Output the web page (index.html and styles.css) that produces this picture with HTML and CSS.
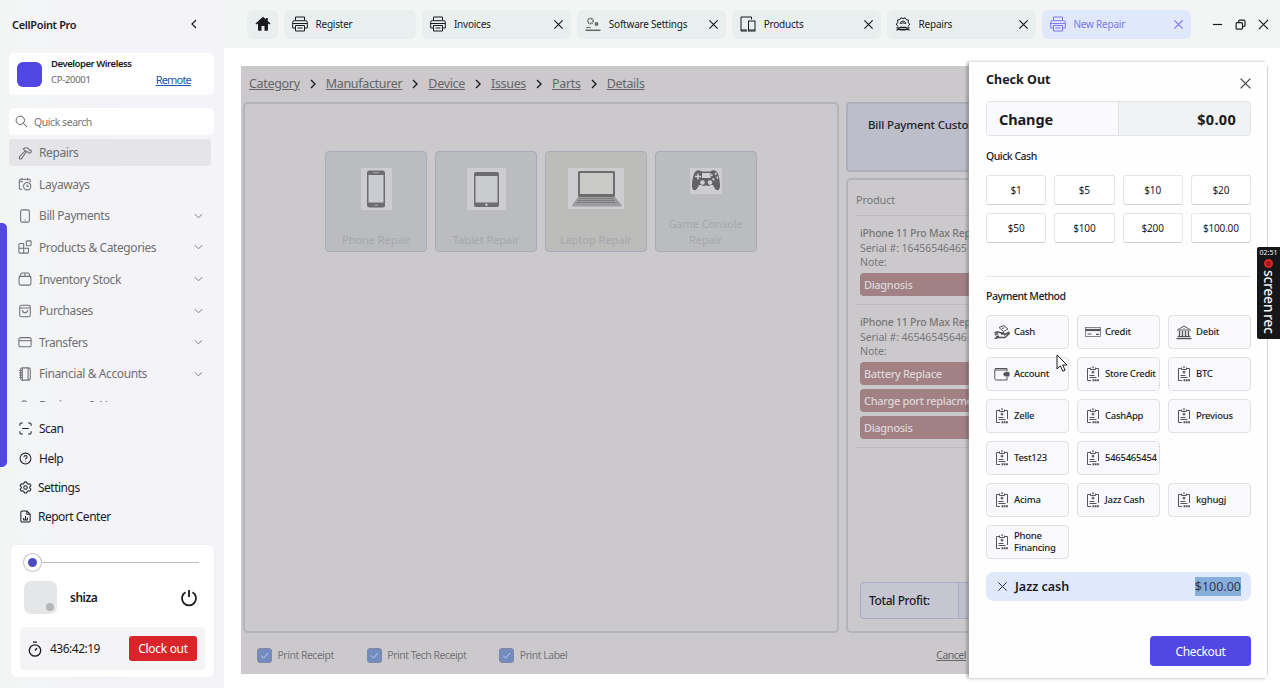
FILE: index.html
```html
<!DOCTYPE html>
<html lang="en">
<head>
  <meta charset="UTF-8">
  <title>CellPoint Pro</title>
  <link rel="stylesheet" href="styles.css">
</head>
<body>
  <!-- shared icons -->
  <svg class="sprite" xmlns="http://www.w3.org/2000/svg">
    <symbol id="i-x" viewBox="0 0 12 12"><path d="M1.5 1.5l9 9M10.5 1.5l-9 9"/></symbol>
    <symbol id="i-down" viewBox="0 0 10 6"><path d="M1 1l4 4 4-4"/></symbol>
    <symbol id="i-right" viewBox="0 0 6 10"><path d="M1 1l4 4-4 4"/></symbol>
    <symbol id="i-printer" viewBox="0 0 16 16"><path d="M3.500 4.500V1h9v3.500M3 12H.7V6.200q0-1.500 1.500-1.500h11.600q1.500 0 1.500 1.500V12H13M.7 7.500h14.600M3.500 9.500h9V15h-9zM5.500 12h5"/></symbol>
    <symbol id="i-bill" viewBox="0 0 16 16"><path d="M5 2.500H2.500v12H6M11 2.500h2.500V11M5.500 1.500v2h5v-2M4.500 9.500h5M4.500 11.500h7"/><path d="M8 .3v2M8 4.800v2.800M6.600 6.200h2.800" stroke-width="1.300"/><path d="M7.500 14.200h6.500" stroke-dasharray="1.800 .5" stroke-width="2"/></symbol>
    <symbol id="i-check" viewBox="0 0 10 8"><path d="M1 4l3 3 5-6"/></symbol>
  </svg>

  <div class="app">
    <aside class="sidebar">
      <div class="brand">
        <span>CellPoint Pro</span>
        <svg class="collapse" viewBox="0 0 6 10"><path d="M5 1L1 5l4 4"/></svg>
      </div>

      <div class="store">
        <div class="store-logo"></div>
        <div class="store-info">
          <b>Developer Wireless</b>
          <span>CP-20001</span>
        </div>
        <a class="remote">Remote</a>
      </div>

      <div class="search">
        <svg viewBox="0 0 14 14"><circle cx="5.700" cy="5.700" r="4.500"/><path d="M9 9l4 4"/></svg>
        <span>Quick search</span>
      </div>

      <div class="nav">
        <div class="nav-item active">
          <svg viewBox="0 0 16 16"><path d="M6 3.500Q9 .8 12 3l1 2 1.700-.6.5 2.500-2.500 1.500-2-2-1.200.5L4 14.300q-1.200.9-2.200 0-.9-1 0-2.200L8.300 5.500 6 3.500zM8.500 5.500l1.500 1.500"/></svg>
          <span>Repairs</span>
        </div>
        <div class="nav-item">
          <svg viewBox="0 0 16 16"><path d="M5 14H3q-1.500 0-1.500-1.500V4Q1.500 2.500 3 2.500h9.500Q14 2.500 14 4v2M1.500 5.500h4M4.500 1v3M11 1v3"/><circle cx="10.500" cy="10.500" r="4.200"/><path d="M10.300 8.500v2.300h2"/></svg>
          <span>Layaways</span>
        </div>
        <div class="nav-item">
          <svg viewBox="0 0 16 16"><rect x="3" y="1" width="10" height="14" rx="2"/><path d="M7.500 12.500h1.200"/></svg>
          <span>Bill Payments</span>
          <svg class="chev"><use href="#i-down"/></svg>
        </div>
        <div class="nav-item">
          <svg viewBox="0 0 16 16"><path d="M6.500 4H2.300Q1 4 1 5.300v8.400Q1 15 2.300 15h8.400q1.300 0 1.300-1.300V9.500H1M6.500 4v11"/><rect x="9.500" y="1" width="5.500" height="5.500" rx="1"/></svg>
          <span>Products &amp; Categories</span>
          <svg class="chev"><use href="#i-down"/></svg>
        </div>
        <div class="nav-item">
          <svg viewBox="0 0 16 16"><rect x="1.200" y="5" width="13.600" height="10" rx="2"/><path d="M1.200 6.500L3.500 2q.4-.8 1.300-.8h6.400q.9 0 1.300.8l2.300 4.500M8 1v4"/></svg>
          <span>Inventory Stock</span>
          <svg class="chev"><use href="#i-down"/></svg>
        </div>
        <div class="nav-item">
          <svg viewBox="0 0 16 16"><rect x="2" y="1.500" width="12" height="13" rx="2"/><path d="M2 4.500h12M5 7q.3 3 3 3t3-3"/></svg>
          <span>Purchases</span>
          <svg class="chev"><use href="#i-down"/></svg>
        </div>
        <div class="nav-item">
          <svg viewBox="0 0 16 16"><rect x="1" y="3" width="14" height="10.500" rx="2"/><path d="M1 6.500h14"/></svg>
          <span>Transfers</span>
          <svg class="chev"><use href="#i-down"/></svg>
        </div>
        <div class="nav-item">
          <svg viewBox="0 0 16 16"><rect x="3" y="1" width="11" height="14" rx="2"/><path d="M11.500 1v14M5 1v14M1.500 4h3M1.500 6.700h3M1.500 9.400h3M1.500 12h3"/></svg>
          <span>Financial &amp; Accounts</span>
          <svg class="chev"><use href="#i-down"/></svg>
        </div>
        <div class="nav-item">
          <svg viewBox="0 0 16 16"><circle cx="7" cy="5" r="3"/><path d="M1 15q0-5 6-5t6 5"/></svg>
          <span>Business &amp; Users</span>
        </div>
      </div>

      <div class="tools">
        <div class="tool">
          <svg viewBox="0 0 14 14"><path d="M1 4V2.500Q1 1 2.500 1H4M10 1h1.500Q13 1 13 2.500V4M13 10v1.500q0 1.500-1.500 1.500H10M4 13H2.500Q1 13 1 11.500V10M3.500 7h7"/></svg>
          <span>Scan</span>
        </div>
        <div class="tool">
          <svg viewBox="0 0 14 14"><circle cx="7" cy="7" r="5.800"/><path d="M5.200 5.600q.2-1.800 1.900-1.800 1.700.1 1.700 1.600 0 1-1.800 2v.7M7 9.600v.8"/></svg>
          <span>Help</span>
        </div>
        <div class="tool">
          <svg viewBox="0 0 14 14"><path d="M5.800 1h2.400l.5 1.700 1.200.7 1.700-.4 1.200 2.100L11.600 6.400v1.200l1.200 1.300-1.200 2.100-1.700-.4-1.200.7-.5 1.700H5.800l-.5-1.700-1.200-.7-1.700.4L1.200 8.900l1.200-1.300V6.400L1.200 5.100 2.400 3l1.700.4 1.200-.7z"/><circle cx="7" cy="7" r="1.900"/></svg>
          <span>Settings</span>
        </div>
        <div class="tool">
          <svg viewBox="0 0 14 14"><path d="M8.500 1H3.500Q2 1 2 2.500v9Q2 13 3.500 13h7q1.500 0 1.500-1.500V4.500zM8.500 1v3.500H12M5 8.500v2M7 6.500v4M9 8v2.500M4.500 10.700h5"/></svg>
          <span>Report Center</span>
        </div>
      </div>

      <div class="user">
        <div class="slider"><i></i></div>
        <div class="user-row">
          <div class="avatar"><i></i></div>
          <b>shiza</b>
          <svg class="power" viewBox="0 0 18 18"><path d="M5.500 3.300A7 7 0 1 0 12.500 3.300M9 1v7"/></svg>
        </div>
        <div class="clock">
          <svg viewBox="0 0 14 16"><circle cx="7" cy="9.500" r="5.700"/><path d="M5 1.200h4M7 9.500l2-2.500"/></svg>
          <span>436:42:19</span>
          <button class="clock-out">Clock out</button>
        </div>
      </div>
      <div class="edge-bar"></div>
    </aside>

    <div class="content">
      <header class="topbar">
        <div class="home">
          <svg viewBox="0 0 16 16"><path d="M8 .8L.5 7.600l1 1L3 7.500V14q0 .8.800.8H6.500V10h3v4.800h2.700q.8 0 .8-.8V7.500l1.500 1.100 1-1L12.800 5V2h-2v1.300z"/></svg>
        </div>
        <div class="tab register">
          <svg class="tab-icon"><use href="#i-printer"/></svg>
          <span>Register</span>
        </div>
        <div class="tab">
          <svg class="tab-icon"><use href="#i-printer"/></svg>
          <span>Invoices</span>
          <svg class="tab-x"><use href="#i-x"/></svg>
        </div>
        <div class="tab">
          <svg class="tab-icon soft" viewBox="0 0 16 16"><circle cx="5.500" cy="5" r="2.600" stroke-dasharray="1.300 .5" stroke-width="1.600"/><circle cx="11.500" cy="8" r="1.200" stroke-width="1.500"/><path d="M1 12q3-1.800 5 0" /><path d="M.5 14.300h15" stroke-width="1.500"/></svg>
          <span>Software Settings</span>
          <svg class="tab-x"><use href="#i-x"/></svg>
        </div>
        <div class="tab">
          <svg class="tab-icon" viewBox="0 0 16 16"><path d="M7 15H1V1h10.500v2.500M1 14h6"/><rect x="8.500" y="5" width="6.500" height="10"/><path d="M8.500 14H15"/></svg>
          <span>Products</span>
          <svg class="tab-x"><use href="#i-x"/></svg>
        </div>
        <div class="tab">
          <svg class="tab-icon" viewBox="0 0 16 16"><path d="M3 10.500L1.200 8 3 6.500 2.500 4l2.300-.4L6 1.700l2 1 2-1 1.200 1.900 2.300.4L13 6.500 14.800 8 13 10.500M5 8q.8-3 3-3t3 3M6.200 7.500q1.800-1.500 3.600 0"/><path d="M1.500 11.500q2 1.200 4 0h5q2 1.200 4 0M1.500 14.300q2-1.500 4-.6h5q2-.9 4 .6" stroke-width="1.400"/></svg>
          <span>Repairs</span>
          <svg class="tab-x"><use href="#i-x"/></svg>
        </div>
        <div class="tab current">
          <svg class="tab-icon"><use href="#i-printer"/></svg>
          <span>New Repair</span>
          <svg class="tab-x"><use href="#i-x"/></svg>
        </div>
        <div class="window-buttons">
          <svg viewBox="0 0 12 12"><path d="M1 6h10"/></svg>
          <svg viewBox="0 0 12 12"><rect x="1.200" y="4" width="7" height="7" rx="1.200"/><path d="M4 4V2.500Q4 1.200 5.300 1.200h4.200q1.400 0 1.400 1.400v4.200q0 1.400-1.400 1.400H8.200"/></svg>
          <svg viewBox="0 0 12 12"><path d="M1 1l10 10M11 1L1 11"/></svg>
        </div>
      </header>

      <main class="page">
        <div class="work">
          <div class="crumbs">
            <a>Category</a><svg><use href="#i-right"/></svg>
            <a>Manufacturer</a><svg><use href="#i-right"/></svg>
            <a>Device</a><svg><use href="#i-right"/></svg>
            <a>Issues</a><svg><use href="#i-right"/></svg>
            <a>Parts</a><svg><use href="#i-right"/></svg>
            <a>Details</a>
          </div>

          <div class="columns">
            <div class="catalog">
              <div class="category">
                <div class="pic"><svg width="31" height="42" viewBox="0 0 31 42"><rect x="6" y="2.500" width="18" height="37" rx="2.500" fill="#6d6d70"/><rect x="7.500" y="7" width="15" height="27.500" fill="#c9ccd0"/><path d="M12.500 4.500h5M13.500 37h3.500" stroke="#aaa"/></svg></div>
                <span>Phone Repair</span>
              </div>
              <div class="category">
                <div class="pic"><svg width="39" height="42" viewBox="0 0 39 42"><rect x="7" y="4" width="25" height="35" rx="2" fill="#6d6d70"/><rect x="8.500" y="8" width="22" height="26.500" fill="#c9cbcd"/><circle cx="19.500" cy="36.700" r="1.200" fill="#ccc"/></svg></div>
                <span>Tablet Repair</span>
              </div>
              <div class="category sand">
                <div class="pic"><svg width="56" height="41" viewBox="0 0 56 41"><rect x="10" y="3" width="37" height="26" rx="1.500" fill="#6d6d70"/><rect x="12" y="5" width="33" height="21" fill="#c9cac8"/><path d="M10 29h37l7 8.500q0 1-1 1H5q-1 0-1-1z" fill="#9c9c9e"/><path d="M11 30.500h35M10 32.500h37M8.500 34.500h40" stroke="#77777a" stroke-dasharray="2 .6"/></svg></div>
                <span>Laptop Repair</span>
              </div>
              <div class="category">
                <div class="pic"><svg width="32" height="26" viewBox="0 0 32 26"><path d="M6 3q3-1.500 5.500.5h9Q23 1.500 26 3q3 2 4 13 .3 6-2.500 6.300-2 .2-4.500-5.300h-2.500q-2 2-4.500.3-2.500 1.700-4.500-.3H9q-2.500 5.500-4.500 5.300Q1.700 22 2 16 3 5 6 3z" fill="#626266"/><rect x="12" y="5" width="8.500" height="5" fill="#cfcfd1"/><path d="M8 5.500v6M5 8.500h6" stroke="#cfcfd1" stroke-width="1.500"/><circle cx="12.500" cy="14.500" r="2.300" fill="#cfcfd1"/><circle cx="20" cy="14.500" r="2.300" fill="#cfcfd1"/><circle cx="24.500" cy="8.500" r="3" fill="none" stroke="#cfcfd1" stroke-dasharray="2 2.700" stroke-width="1.800"/></svg></div>
                <span>Game Console Repair</span>
              </div>
            </div>

            <div class="order">
              <div class="customer">Bill Payment Customer</div>
              <div class="cart">
                <div class="cart-head">Product</div>
                <div class="line">
                  <b>iPhone 11 Pro Max Repair</b>
                  <span>Serial #: 16456546465</span>
                  <span>Note:</span>
                  <div class="issue">Diagnosis</div>
                </div>
                <div class="line">
                  <b>iPhone 11 Pro Max Repair</b>
                  <span>Serial #: 46546545646</span>
                  <span>Note:</span>
                  <div class="issue">Battery Replace</div>
                  <div class="issue">Charge port replacment</div>
                  <div class="issue">Diagnosis</div>
                </div>
                <div class="profit"><b>Total Profit:</b><span></span></div>
              </div>
            </div>
          </div>

          <div class="options">
            <label><i><svg><use href="#i-check"/></svg></i>Print Receipt</label>
            <label><i><svg><use href="#i-check"/></svg></i>Print Tech Receipt</label>
            <label><i><svg><use href="#i-check"/></svg></i>Print Label</label>
            <a>Cancel</a>
          </div>
        </div>
      </main>
    </div>
  </div>

  <!-- checkout drawer -->
  <section class="drawer">
    <div class="drawer-head">
      <h2>Check Out</h2>
      <svg><use href="#i-x"/></svg>
    </div>
    <div class="change"><span>Change</span><span>$0.00</span></div>

    <h3>Quick Cash</h3>
    <div class="quick">
      <button>$1</button>
      <button>$5</button>
      <button>$10</button>
      <button>$20</button>
      <button>$50</button>
      <button>$100</button>
      <button>$200</button>
      <button>$100.00</button>
    </div>

    <h3 class="methods-title">Payment Method</h3>
    <div class="methods">
      <button>
        <svg viewBox="0 0 16 16"><path d="M5 3.500l5-2 4 3.500-4.500 2.500zM8 4.500l2.500-.8"/><path d="M.5 9l3-1.200 3 1h3l.5 1.200H7M10 11l4.500-2.500 1 .7L11 13.500H5L.5 14.500M1 11l3-1.500M2 13l3-1" stroke-width="1.500"/></svg>
        <span>Cash</span>
      </button>
      <button>
        <svg viewBox="0 0 16 16"><rect x=".5" y="3.500" width="15" height="9" stroke-width=".7"/><path d="M.5 6h15" stroke-width="2.200"/><path d="M2.500 10h4M11 10.300h3" stroke-width="1.200"/></svg>
        <span>Credit</span>
      </button>
      <button>
        <svg viewBox="0 0 16 16"><path d="M1.500 6L8 2l6.500 4zM8 4.200v.8"/><path d="M3.500 7v5.500M6.500 7v5.500M9.500 7v5.500M12.500 7v5.500" stroke-width="1.400"/><path d="M1.500 12.700h13M.5 14.700h15" stroke-width="1.300"/></svg>
        <span>Debit</span>
      </button>
      <button>
        <svg viewBox="0 0 16 16"><path d="M13 5.500V2.500H2Q.8 2.500.8 3.500v9q0 1.500 1.500 1.500H13v-3M1 4h12"/><path d="M15 6.500h-3.500q-1.700 0-1.700 1.800 0 1.700 1.700 1.700H15z" fill="currentColor"/></svg>
        <span>Account</span>
      </button>
      <button><svg><use href="#i-bill"/></svg><span>Store Credit</span></button>
      <button><svg><use href="#i-bill"/></svg><span>BTC</span></button>
      <button><svg><use href="#i-bill"/></svg><span>Zelle</span></button>
      <button><svg><use href="#i-bill"/></svg><span>CashApp</span></button>
      <button><svg><use href="#i-bill"/></svg><span>Previous</span></button>
      <button><svg><use href="#i-bill"/></svg><span>Test123</span></button>
      <button><svg><use href="#i-bill"/></svg><span>5465465454</span></button>
      <button class="first"><svg><use href="#i-bill"/></svg><span>Acima</span></button>
      <button><svg><use href="#i-bill"/></svg><span>Jazz Cash</span></button>
      <button><svg><use href="#i-bill"/></svg><span>kghugj</span></button>
      <button><svg><use href="#i-bill"/></svg><span>Phone Financing</span></button>
    </div>

    <div class="paid">
      <svg><use href="#i-x"/></svg>
      <span>Jazz cash</span>
      <mark>$100.00</mark>
    </div>
    <button class="checkout">Checkout</button>
  </section>

  <div class="recorder">
    <small>02:51</small>
    <i></i>
    <span>screen<em>rec</em></span>
  </div>

  <svg class="cursor" viewBox="0 0 12 18"><path d="M1 1v14l3.300-3.200 2.500 5.400 2.300-1-2.500-5.200H11z"/></svg>
</body>
</html>
```
FILE: styles.css
```css
* {
  box-sizing: border-box;
}
body {
  margin: 0;
  width: 1280px;
  height: 688px;
  overflow: hidden;
  position: relative;
  background: #fff;
  color: #1b1b1f;
  font-family: "Noto Sans", "Open Sans", sans-serif;
  font-size: 12px;
}
svg {
  fill: none;
  stroke: currentColor;
  flex: none;
}
button {
  font-family: inherit;
  color: inherit;
  padding: 0;
}
.sprite {
  display: none;
}
.app {
  display: flex;
  height: 688px;
}

/* sidebar */
.sidebar {
  position: relative;
  width: 224px;
  padding: 0 10px 11px 9px;
  background: linear-gradient(90deg, #f3f5f5, #f4f3f8 60%);
  display: flex;
  flex-direction: column;
}
.brand {
  height: 53px;
  padding: 0 17px 5px 3px;
  display: flex;
  align-items: center;
  justify-content: space-between;
  font-size: 11px;
  font-weight: 600;
  letter-spacing: -0.35px;
}
.collapse {
  width: 6px;
  height: 10px;
  stroke-width: 1.2;
}
.store {
  display: flex;
  width: 205px;
  height: 42px;
  padding: 0 23px 0 8px;
  align-items: center;
  background: #fff;
  border-radius: 5px;
}
.store-logo {
  width: 25px;
  height: 25px;
  border-radius: 6px;
  background: #5147e5;
}
.store-info {
  flex: 1;
  margin-left: 9px;
  display: flex;
  flex-direction: column;
  font-size: 9.5px;
  line-height: 16px;
  padding-bottom: 4px;
  white-space: nowrap;
}
.store-info b {
  font-size: 9.5px;
  font-weight: 600;
  letter-spacing: -0.45px;
}
.store-info span {
  color: #666;
  letter-spacing: -0.3px;
}
.remote {
  margin: 11px 0 0 -40px;
  font-size: 11px;
  letter-spacing: -0.8px;
  color: #2456a8;
  text-decoration: underline;
}
.search {
  display: flex;
  align-items: center;
  width: 205px;
  height: 27px;
  margin-top: 13px;
  padding-left: 6px;
  background: #fff;
  border-radius: 5px;
  color: #777;
  font-size: 10.5px;
  letter-spacing: -0.45px;
}
.search svg {
  width: 13px;
  height: 13px;
  margin-right: 6px;
  color: #555;
}
.nav {
  height: 263px;
  margin-top: 4px;
  overflow: hidden;
  flex: none;
}
.nav-item {
  display: flex;
  align-items: center;
  width: 202px;
  height: 27px;
  margin-bottom: 4.65px;
  padding: 0 8px 0 9px;
  font-size: 12px;
  letter-spacing: -0.4px;
  color: #707074;
}
.nav-item svg {
  width: 14px;
  height: 14px;
  margin-right: 7px;
  stroke-width: 1.2;
}
.nav-item .chev {
  width: 9px;
  height: 6px;
  margin: 0 0 0 auto;
  stroke-width: 1;
}
.nav-item.active {
  background: #e5e5e7;
  border-radius: 3px;
}
.tools {
  margin-top: 12px;
}
.tool {
  display: flex;
  align-items: center;
  height: 29.4px;
  padding-left: 10px;
  font-size: 12px;
  letter-spacing: -0.5px;
}
.tool svg {
  width: 13px;
  height: 13px;
  margin-right: 7px;
  stroke-width: 1.1;
}
.tool:nth-child(n+3) svg {
  margin-right: 6px;
}
.user {
  width: 203px;
  height: 132px;
  margin: auto 0 0 2px;
  padding: 17px 9px 0;
  background: #fff;
  border-radius: 5px;
  box-shadow: 0 0 2px #e6e6ea;
}
.slider {
  height: 1px;
  margin: 0 6px 0 4px;
  background: #b9bac4;
}
.slider i {
  display: block;
  position: relative;
  top: -8px;
  width: 17px;
  height: 17px;
  border: 4px solid #fff;
  border-radius: 50%;
  background: #4a4cc0;
  box-shadow: 0 0 0 1px #c0c0c6;
}
.user-row {
  display: flex;
  align-items: center;
  height: 33px;
  margin: 18px 7px 13px 4px;
}
.user-row b {
  margin-left: 13px;
  font-weight: 600;
  letter-spacing: -0.5px;
}
.avatar {
  display: flex;
  align-items: flex-end;
  justify-content: flex-end;
  width: 33px;
  height: 33px;
  padding: 3px;
  border-radius: 7px;
  background: #e5e6e7;
}
.avatar i {
  width: 8px;
  height: 8px;
  border-radius: 50%;
  background: #b5b6b7;
}
.power {
  width: 18px;
  height: 18px;
  margin-left: auto;
  stroke-width: 1.8;
}
.clock {
  display: flex;
  align-items: center;
  height: 43px;
  padding: 0 8px;
  border-radius: 4px;
  background: #f4f4f6;
  font-size: 12px;
  letter-spacing: -0.5px;
}
.clock svg {
  width: 14px;
  height: 16px;
  margin-right: 8px;
  stroke-width: 1.3;
}
.clock-out {
  width: 68px;
  height: 25px;
  margin-left: auto;
  border: 0;
  border-radius: 3px;
  background: #d92529;
  color: #fff;
  font-size: 12px;
  letter-spacing: -0.3px;
}
.edge-bar {
  position: absolute;
  left: 0;
  top: 223px;
  width: 7px;
  height: 244px;
  border-radius: 0 5px 5px 0;
  background: #5147e5;
}

/* tabs */
.content {
  flex: 1;
  min-width: 0;
}
.topbar {
  display: flex;
  align-items: center;
  gap: 6px;
  height: 48px;
  padding-left: 23px;
  background: #f3f5f5;
}
.home,
.tab {
  display: flex;
  align-items: center;
  height: 29px;
  border-radius: 6px;
  background: #e9efee;
}
.home {
  width: 31px;
  justify-content: center;
}
.home svg {
  width: 16px;
  height: 16px;
  fill: #1b1b1f;
  stroke: none;
}
.tab {
  width: 148.900px;
  padding: 0 7px 0 8px;
  font-size: 10px;
  letter-spacing: -0.22px;
}
.tab.register {
  width: 132.400px;
}
.tab-icon {
  width: 16px;
  height: 16px;
  margin-right: 7.500px;
}
.tab-icon.soft {
  color: #666;
}
.tab-x {
  width: 11px;
  height: 11px;
  margin-left: auto;
  stroke-width: 1.3;
}
.tab.current {
  background: #dfe9fb;
  color: #7a78ee;
}
.window-buttons {
  display: flex;
  gap: 12px;
  margin-left: 15.500px;
}
.window-buttons svg {
  width: 11px;
  height: 11px;
  stroke-width: 1.3;
}

/* repair page, dimmed behind the drawer */
.page {
  padding: 18px 12px 0 17px;
}
.work {
  height: 608px;
  padding: 0 2px;
  background: #cbc9cb;
  color: #77777a;
  overflow: hidden;
}
.crumbs {
  display: flex;
  align-items: center;
  height: 36px;
  padding: 0 0 1px 6px;
  font-size: 12.5px;
  letter-spacing: -0.32px;
  color: #666669;
}
.crumbs a {
  text-decoration: underline;
}
.crumbs svg {
  width: 6px;
  height: 10px;
  margin: 0 10px;
  color: #1b1b1f;
  stroke-width: 1.4;
}
.columns {
  display: flex;
  gap: 7px;
  height: 531px;
}
.catalog {
  display: flex;
  align-items: flex-start;
  justify-content: center;
  gap: 7.700px;
  width: 596px;
  padding: 47px 0 0;
  border: 2px solid #b3b4b6;
  border-radius: 5px;
}
.category {
  display: flex;
  flex-direction: column;
  align-items: center;
  justify-content: space-between;
  width: 102px;
  height: 101px;
  padding: 16px 10px 3px;
  border: 1px solid #a9abb9;
  border-radius: 4px;
  background: #babcc0;
  color: #a6a7ab;
  font-size: 11px;
  line-height: 16px;
  letter-spacing: -0.05px;
  text-align: center;
}
.category.sand {
  background: #bcbcba;
}
.category span {
  white-space: nowrap;
}
.category:last-child span {
  white-space: normal;
}
.pic svg {
  display: block;
  background: #cdcdcf;
  stroke: none;
}
.order {
  flex: 1;
  display: flex;
  flex-direction: column;
  gap: 6px;
}
.customer {
  height: 70px;
  padding: 13px 0 0 20px;
  border: 2px solid #adb0b8;
  border-radius: 4px;
  background: #bcbeca;
  color: #222226;
  font-size: 11.5px;
  font-weight: 500;
  letter-spacing: -0.15px;
  white-space: nowrap;
}
.cart {
  display: flex;
  flex-direction: column;
  height: 455px;
  padding: 8px 8px 12px;
  border: 2px solid #b3b4b6;
  border-radius: 5px;
}
.cart-head {
  height: 28px;
  padding-top: 4px;
  font-size: 11px;
  letter-spacing: -0.2px;
  border-bottom: 1px solid #bdbdc0;
}
.line {
  display: flex;
  flex-direction: column;
  padding: 10px 0 8px 4px;
  border-bottom: 1px solid #bdbdc0;
  font-size: 10.5px;
  line-height: 14.500px;
  letter-spacing: -0.08px;
}
.line b {
  font-weight: 500;
  letter-spacing: -0.22px;
}
.issue {
  height: 23px;
  margin-top: 4px;
  padding-left: 4px;
  border-radius: 4px;
  background: #a28184;
  color: #dcd6d8;
  font-size: 11px;
  font-weight: 500;
  line-height: 23px;
  letter-spacing: -0.32px;
}
.line span + .issue {
  margin-top: 3.500px;
}
.profit {
  display: flex;
  align-items: center;
  height: 37px;
  margin: auto 0 0 4px;
  border: 1px solid #a9acc6;
  border-radius: 4px;
  background: #c5c6cf;
}
.profit b {
  width: 97px;
  padding-left: 8px;
  color: #1b1b1f;
  font-size: 12px;
  font-weight: 500;
  letter-spacing: -0.4px;
}
.profit span {
  flex: 1;
  height: 100%;
  border-left: 1px solid #a9acc6;
  background: #bec0cd;
}
.options {
  display: flex;
  align-items: center;
  height: 41px;
  padding: 3px 0 0 14px;
  font-size: 10.5px;
  letter-spacing: -0.5px;
}
.options label {
  display: flex;
  align-items: center;
  margin-right: 33px;
}
.options i {
  display: grid;
  place-items: center;
  width: 15px;
  height: 15px;
  margin-right: 5.500px;
  border: 1px solid #8089a0;
  border-radius: 3px;
  background: #728bc0;
  color: #cbd8f2;
}
.options i svg {
  width: 9px;
  height: 7px;
}
.options a {
  margin-left: 336px;
  color: #66666a;
  text-decoration: underline;
}

/* drawer */
.drawer {
  position: absolute;
  left: 969px;
  top: 62px;
  width: 298px;
  height: 616px;
  padding: 0 16px 0 17px;
  background: #fefeff;
  box-shadow: -2px 0 3px rgba(0, 0, 0, 0.3), 0 1px 2px #f2f2f5;
  display: flex;
  flex-direction: column;
}
.drawer-head {
  display: flex;
  justify-content: space-between;
  height: 39px;
  flex: none;
}
.drawer-head h2 {
  margin: 9px 0 0;
  font-size: 12.5px;
  line-height: 18px;
  font-weight: 700;
}
.drawer-head svg {
  width: 13px;
  height: 13px;
  margin: 15px -1px 0 0;
  color: #444;
  stroke-width: 1.2;
}
.change {
  display: flex;
  height: 35px;
  flex: none;
  border: 1px solid #e2e3e6;
  border-radius: 4px;
  font-size: 14.5px;
  font-weight: 700;
  line-height: 35px;
  letter-spacing: -0.1px;
  overflow: hidden;
}
.change span {
  flex: 1;
  padding: 0 14px 0 12px;
  background: #fafafd;
}
.change span + span {
  border-left: 1px solid #e2e3e6;
  background: #f1f2f4;
  letter-spacing: 0.3px;
  text-align: right;
}
.drawer h3 {
  margin: 12px 0 11px;
  font-size: 10.5px;
  line-height: 16px;
  font-weight: 500;
  letter-spacing: -0.5px;
}
.quick {
  display: grid;
  grid-template-columns: repeat(4, 1fr);
  gap: 8px;
}
.quick button {
  height: 30px;
  border: 1px solid #e5e5e9;
  border-bottom-color: #cfcfd3;
  border-radius: 3px;
  background: #fff;
  font-size: 10px;
  letter-spacing: -0.2px;
}
.drawer .methods-title {
  margin: 33px 0 11px;
  padding-top: 11px;
  border-top: 1px solid #e6e6e9;
}
.methods {
  display: grid;
  grid-template-columns: repeat(3, 83px);
  justify-content: space-between;
  gap: 8px;
}
.methods button {
  display: flex;
  align-items: center;
  height: 34px;
  padding-left: 7px;
  border: 1px solid #e0e1e5;
  border-radius: 4px;
  background: #f9f9fb;
  font-size: 9.5px;
  font-weight: 500;
  line-height: 12px;
  letter-spacing: -0.26px;
  text-align: left;
}
.methods .first {
  grid-column: 1;
}
.methods svg {
  width: 16px;
  height: 16px;
  margin-right: 4px;
  color: #55555a;
}
.paid {
  display: flex;
  align-items: center;
  height: 29px;
  flex: none;
  margin-top: 13px;
  padding: 0 10px 0 11px;
  border-radius: 8px;
  background: #dfe9fb;
  font-size: 12.5px;
  font-weight: 600;
}
.paid svg {
  width: 11px;
  height: 11px;
  margin-right: 7px;
}
.paid mark {
  margin-left: auto;
  background: #86aedb;
  color: #35355a;
  font-weight: 400;
  line-height: 19px;
}
.checkout {
  align-self: flex-end;
  width: 101px;
  height: 30px;
  flex: none;
  margin-top: 35px;
  border: 0;
  border-radius: 4px;
  background: #5147e5;
  color: #fff;
  font-size: 12px;
  letter-spacing: -0.35px;
}

/* recorder badge and pointer */
.recorder {
  position: absolute;
  right: 0;
  top: 247px;
  width: 23px;
  height: 92px;
  display: flex;
  flex-direction: column;
  align-items: center;
  background: #161618;
  color: #f2f2f2;
  border-radius: 2px 0 0 2px;
}
.recorder small {
  font-size: 7px;
  line-height: 11px;
}
.recorder i {
  width: 9px;
  height: 9px;
  margin: 1px 0 2px;
  border: 2px solid #e02525;
  border-radius: 50%;
  background: #a01818;
}
.recorder span {
  writing-mode: vertical-rl;
  font-size: 14px;
  font-weight: 500;
  line-height: 20px;
  letter-spacing: -0.35px;
}
.recorder em {
  margin-top: 2px;
  font-style: normal;
}
.cursor {
  position: absolute;
  left: 1056px;
  top: 354px;
  width: 12px;
  height: 18px;
  fill: #fff;
  stroke: #1b1b1f;
}
```
